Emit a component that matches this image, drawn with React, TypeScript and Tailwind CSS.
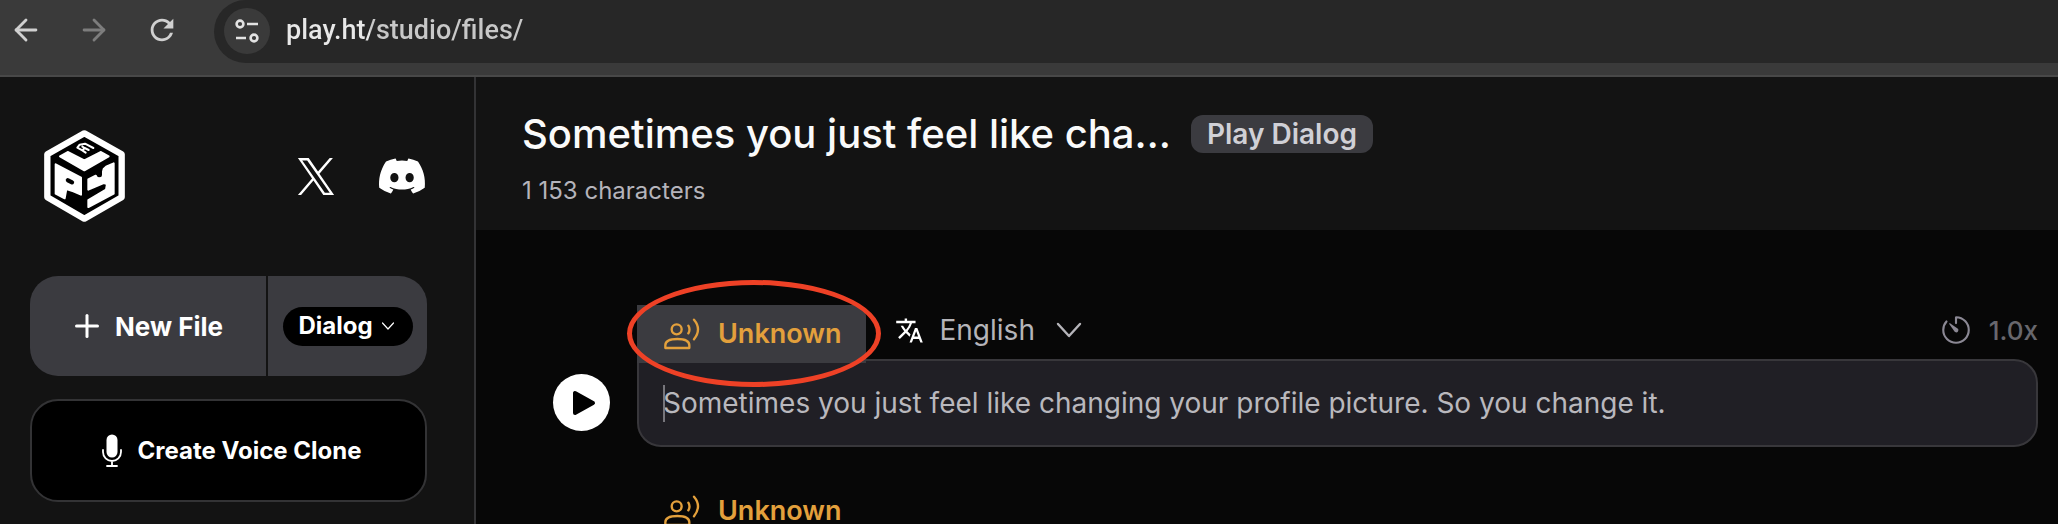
import type { ReactNode } from 'react';
import { ArrowLeft, ArrowRight, Plus } from 'lucide-react';
import { FaDiscord } from 'react-icons/fa';
import { IoTimerOutline } from 'react-icons/io5';
import { MdRefresh, MdTranslate } from 'react-icons/md';

type IconProps = { className?: string };

function SiteSettingsIcon({ className }: IconProps) {
  return (
    <svg viewBox="0 0 24 26" className={className} fill="none" stroke="currentColor" strokeWidth="2.6">
      <circle cx="5" cy="6" r="3.4" />
      <path d="M12 6h11M1 20h10" />
      <circle cx="19" cy="20" r="3.4" />
    </svg>
  );
}

function CubeLogo({ className }: IconProps) {
  return (
    <svg viewBox="26 30 243 276" className={className} role="img" aria-label="PlayHT">
      <path
        d="M147 40 259 103V232L147 296 36 232V103Z"
        fill="#000"
        stroke="#fff"
        strokeWidth="19"
        strokeLinejoin="round"
      />
      <g fill="#fff" stroke="#fff" strokeWidth="6" strokeLinejoin="round">
        <path d="M74 109 97 96 147 121 197 96 220 109 147 151Z" />
        <path d="M61 133 137 173V224L114 214 93 207 88 235 61 221Z" />
        <path d="M159 178 181 167 187 176 199 170 205 147 214 139 235 130V221L159 261V240L212 209 215 192 205 189 159 209Z" />
      </g>
      <path d="M98 181 110 187" stroke="#000" strokeWidth="13" strokeLinecap="round" />
      <path d="M193 155V165" stroke="#000" strokeWidth="14" strokeLinecap="round" />
      <path
        d="M151 98 141 91 148 84 160 90M141 91 126 83 133 74 149 71 174 84M148 84 141 80"
        fill="none"
        stroke="#fff"
        strokeWidth="6"
        strokeLinejoin="round"
        strokeLinecap="round"
      />
    </svg>
  );
}

function XLogo({ className }: IconProps) {
  return (
    <svg viewBox="0 0 1200 1227" className={className} fill="currentColor">
      <path d="M714.163 519.284L1160.89 0H1055.03L667.137 450.887L357.328 0H0L468.492 681.821L0 1226.37H105.866L515.491 750.218L842.672 1226.37H1200L714.137 519.284H714.163ZM569.165 687.828L521.697 619.934L144.011 79.6944H306.615L611.412 515.685L658.88 583.579L1055.08 1150.3H892.476L569.165 687.854V687.828Z" />
    </svg>
  );
}

function MicIcon({ className }: IconProps) {
  return (
    <svg viewBox="0 0 20 34" className={className} fill="none" stroke="currentColor" strokeWidth="1.8" strokeLinecap="round">
      <rect x="4.5" y="0.5" width="11" height="23" rx="5.5" fill="currentColor" stroke="none" />
      <path d="M1 16v2a9 9 0 0 0 18 0v-2M10 27v5M5 32h10" />
    </svg>
  );
}

function SpeakerIcon({ className }: IconProps) {
  return (
    <svg viewBox="0 0 108 96" className={className} fill="none" stroke="currentColor" strokeWidth="7" strokeLinecap="round" strokeLinejoin="round">
      <circle cx="38" cy="34" r="15" />
      <path d="M4 90V82C4 68 18 63 40 63S76 68 76 82V90Z" />
      <path d="M73 23q7 11 0 23M90 5q24 28 0 59" />
    </svg>
  );
}

function Chevron({ className }: IconProps) {
  return (
    <svg viewBox="0 0 26 16" className={className} fill="none" stroke="currentColor" strokeWidth="2.4" strokeLinecap="round" strokeLinejoin="round">
      <path d="M2 2l11 12L24 2" />
    </svg>
  );
}

function BrowserBar() {
  return (
    <header className="flex h-[77px] shrink-0 items-start border-b-2 border-[#484848] bg-[#3a3a3a] text-[#d0d0d0]">
      <nav className="flex h-[60px] w-[214px] shrink-0 items-center gap-[34px] pl-[9px]">
        <button type="button" aria-label="Back">
          <ArrowLeft className="size-[34px]" strokeWidth={2} />
        </button>
        <button type="button" aria-label="Forward" className="text-[#7d7d7d]" disabled>
          <ArrowRight className="size-[34px]" strokeWidth={2} />
        </button>
        <button type="button" aria-label="Reload">
          <MdRefresh className="size-[34px]" />
        </button>
      </nav>
      <div className="flex h-[63px] flex-1 items-center gap-4 rounded-l-full bg-[#272727] pb-[2px] pl-[10px]">
        <button
          type="button"
          aria-label="View site information"
          className="flex size-[46px] shrink-0 items-center justify-center rounded-full bg-[#3a3a3a] text-[#e3e3e3]"
        >
          <SiteSettingsIcon className="h-[26px] w-6" />
        </button>
        <input
          aria-label="Address"
          defaultValue="play.ht/studio/files/"
          className="min-w-0 flex-1 bg-linear-[90deg,#e8e8e8_84px,#c8c8c8_84px] bg-clip-text font-[Roboto,sans-serif] text-[27px] font-medium text-transparent outline-none"
        />
      </div>
    </header>
  );
}

function Sidebar() {
  return (
    <aside className="w-[476px] shrink-0 border-r-2 border-[#333335] bg-[#131313] pt-[53px] pr-[47px] pl-[30px]">
      <div className="flex items-center pl-[14px]">
        <CubeLogo className="h-[92px] w-[81px]" />
        <a href="#x" aria-label="X" className="ml-auto">
          <XLogo className="h-[37px] w-[38px]" />
        </a>
        <a href="#discord" aria-label="Discord" className="ml-[42px]">
          <FaDiscord className="h-10 w-[50px]" />
        </a>
      </div>

      <div className="mt-[54px] flex h-[100px] gap-[2px] overflow-hidden rounded-[28px]">
        <button type="button" className="flex flex-1 items-center justify-center gap-[10px] bg-[#3b3b40] pr-1 text-[26px] font-bold">
          <Plus className="size-9" strokeWidth={2} />
          New File
        </button>
        <div className="flex w-[159px] items-center justify-center bg-[#3b3b40]">
          <div className="relative flex h-[39px] w-[130px] items-center rounded-full bg-black">
            <select
              aria-label="File type"
              className="h-full w-full appearance-none rounded-full pl-4 text-[24px] font-bold outline-none"
            >
              <option>Dialog</option>
            </select>
            <Chevron className="pointer-events-none absolute right-[18px] h-2 w-[14px]" />
          </div>
        </div>
      </div>

      <button
        type="button"
        className="mt-[23px] flex h-[103px] w-full items-center justify-center gap-4 rounded-[28px] border-2 border-[#333335] bg-black pl-[6px] text-[24px] font-bold"
      >
        <MicIcon className="h-[34px] w-5" />
        Create Voice Clone
      </button>
    </aside>
  );
}

function VoiceTab({ active, children }: { active?: boolean; children?: ReactNode }) {
  return (
    <div className="relative">
      <button
        type="button"
        className={`flex h-[58px] items-center gap-[18px] rounded-tr-xl pr-6 pl-[27px] text-[27px] font-semibold text-[#e3a03c] ${
          active ? 'bg-[#3b3b40]' : ''
        }`}
      >
        <SpeakerIcon className="h-8 w-9" />
        Unknown
      </button>
      {children}
    </div>
  );
}

function Segment() {
  return (
    <div className="flex items-end gap-[27px]">
      <button
        type="button"
        aria-label="Play"
        className="mb-4 flex size-[57px] shrink-0 items-center justify-center rounded-full bg-white text-black"
      >
        <svg viewBox="0 0 24 26" className="ml-1 h-[26px] w-6" fill="currentColor" stroke="currentColor" strokeWidth="4" strokeLinejoin="round">
          <path d="M3 3v20l18-10z" />
        </svg>
      </button>
      <div className="min-w-0 flex-1">
        <div className="relative z-10 -mb-1 flex h-[58px] items-center">
          <VoiceTab active>
            <span className="pointer-events-none absolute -top-[25px] -left-[10px] h-[107px] w-[254px] rounded-[50%] border-[5px] border-[#ee4126]" />
          </VoiceTab>
          <div className="flex flex-1 items-center pb-2 pl-[29px] text-[28px] text-[#b5b4b9]">
            <MdTranslate className="size-[29px] text-white" />
            <div className="relative ml-4 flex items-center">
              <select aria-label="Language" className="appearance-none pr-12 outline-none">
                <option>English</option>
              </select>
              <Chevron className="pointer-events-none absolute right-[2px] h-4 w-[26px]" />
            </div>
            <button type="button" className="ml-auto flex items-center gap-4 text-[26px] font-medium text-[#68676d]">
              <IoTimerOutline className="size-[34px] text-[#8b8894]" />
              1.0x
            </button>
          </div>
        </div>
        <div className="relative flex h-[88px] items-center rounded-[24px] rounded-tl-none border-2 border-[#38373b] bg-[#201f25] px-6">
          <span className="absolute left-6 h-[37px] w-[2px] bg-[#77767c]" />
          <input
            aria-label="Segment text"
            defaultValue="Sometimes you just feel like changing your profile picture. So you change it."
            className="w-full text-[28px] text-[#b9b8bd] outline-none"
          />
        </div>
      </div>
    </div>
  );
}

function Editor() {
  return (
    <main className="min-w-0 flex-1">
      <div className="h-[153px] bg-[#131313] px-[46px] pt-8">
        <div className="flex items-center gap-5">
          <h1 className="text-[40px] leading-[50px] font-medium text-[#fafafa]">Sometimes you just feel like cha…</h1>
          <span className="rounded-xl bg-[#3b3b40] px-4 text-[28px] leading-[38px] font-semibold text-[#d0d0d6]">
            Play Dialog
          </span>
        </div>
        <p className="mt-4 text-[24px] leading-8 text-[#b5b4bb]">1 153 characters</p>
      </div>
      <div className="pt-[75px] pr-5 pl-[77px]">
        <Segment />
        <div className="mt-[35px] pl-[84px]">
          <VoiceTab />
        </div>
      </div>
    </main>
  );
}

export default function App() {
  return (
    <div className="flex h-screen flex-col overflow-hidden bg-[#070707] font-[Inter,sans-serif] text-white">
      <BrowserBar />
      <div className="flex min-h-0 flex-1">
        <Sidebar />
        <Editor />
      </div>
    </div>
  );
}
